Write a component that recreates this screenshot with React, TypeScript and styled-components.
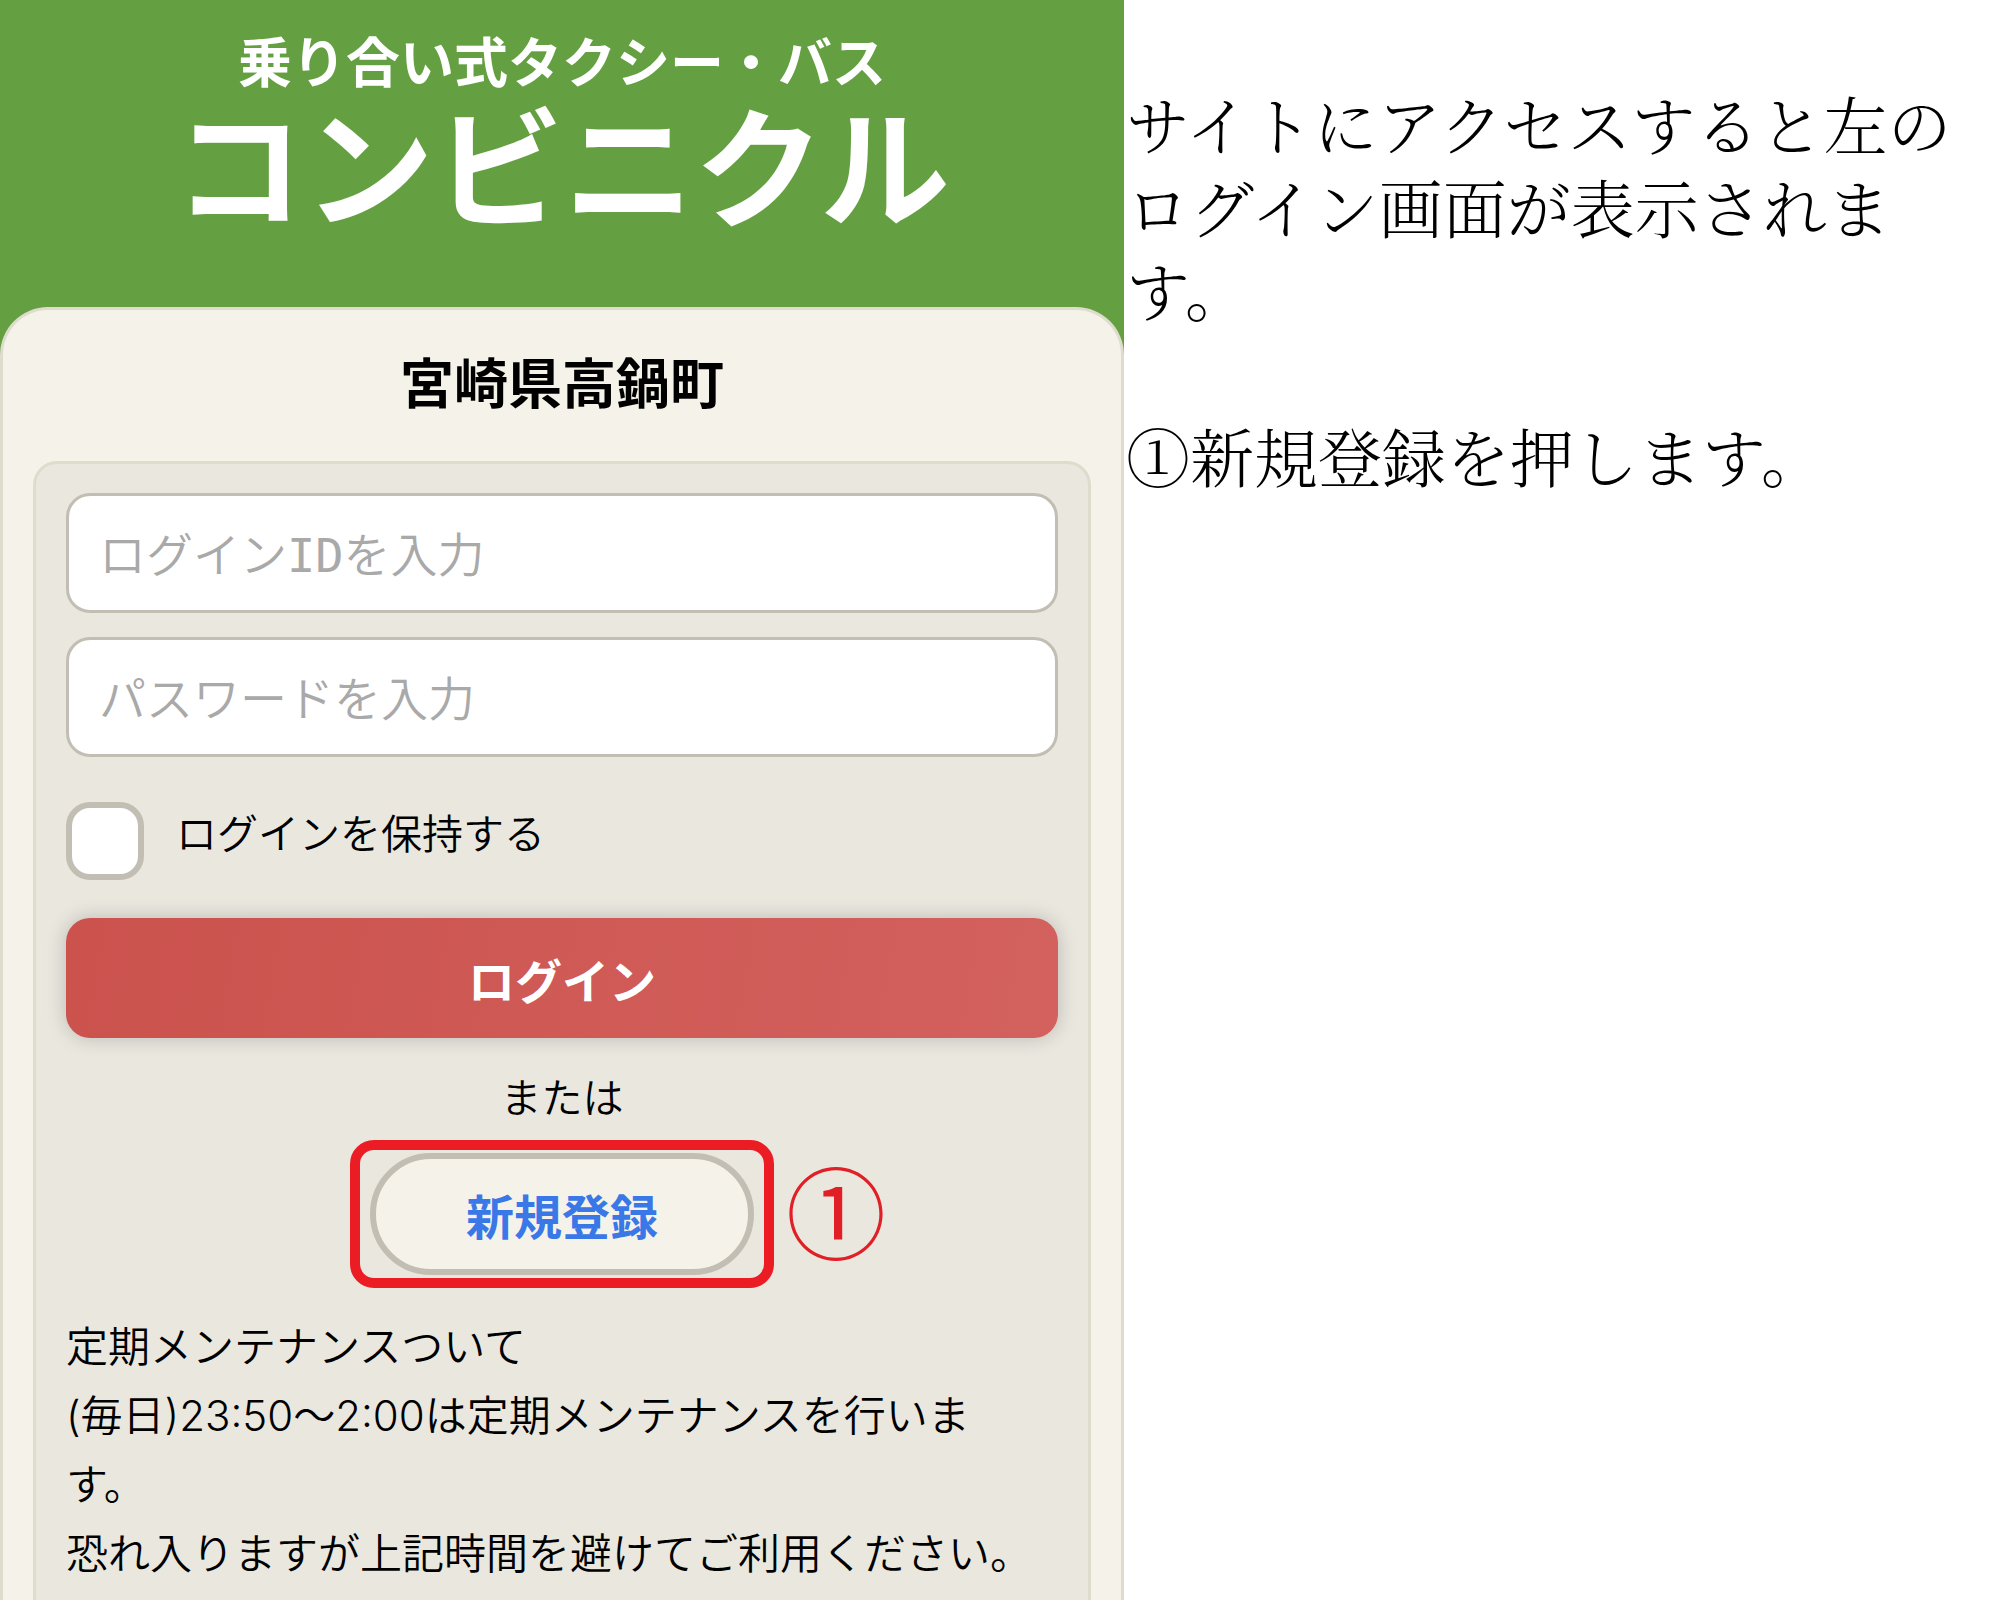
import React from "react";
import styled, { createGlobalStyle } from "styled-components";

const sans = `Inter, "Noto Sans CJK JP", sans-serif`;

const GlobalStyle = createGlobalStyle`
  *, *::before, *::after { box-sizing: border-box; }
  body { margin: 0; background: #ffffff; color: #000000; }
  h1, h2, p { margin: 0; }
`;

const Page = styled.div`
  display: grid;
  grid-template-columns: 562fr 438fr;
  min-height: 100vh;
`;

const Phone = styled.main`
  display: flex;
  flex-direction: column;
  min-width: 0;
  background: #64a042;
  font-family: ${sans};
  font-weight: 350;
`;

const Banner = styled.header`
  padding: 32px 24px 63px;
  text-align: center;
  color: #ffffff;
`;

const Tagline = styled.p`
  font-size: 54px;
  font-weight: 600;
  line-height: 64px;
`;

const ServiceName = styled.h1`
  font-size: 130px;
  font-weight: 700;
  line-height: 148px;
`;

const Sheet = styled.section`
  flex: 1;
  display: flex;
  flex-direction: column;
  padding: 43px 30px 0;
  background: #f5f3e9;
  border: 3px solid #dedccc;
  border-bottom: 0;
  border-radius: 48px 48px 0 0;
`;

const TownName = styled.h2`
  margin-bottom: 44px;
  text-align: center;
  font-size: 54px;
  font-weight: 600;
  line-height: 64px;
`;

const LoginForm = styled.form`
  flex: 1;
  display: flex;
  flex-direction: column;
  padding: 29px 30px 0;
  background: #eae7df;
  border: 3px solid #dedccc;
  border-bottom: 0;
  border-radius: 24px 24px 0 0;
`;

const Fields = styled.div`
  display: grid;
  gap: 24px;
`;

const TextField = styled.input`
  width: 100%;
  height: 120px;
  padding: 4px 30px 0;
  background: #ffffff;
  border: 3px solid #c2beb3;
  border-radius: 24px;
  font-family: "DejaVu Sans Mono", "Noto Sans CJK JP", monospace;
  font-size: 47px;
  font-weight: 350;
  color: #000000;

  &::placeholder {
    color: #a9a9a9;
    opacity: 1;
  }
`;

const KeepRow = styled.div`
  display: flex;
  align-items: flex-start;
  gap: 32px;
  margin: 45px 0 38px;
`;

const KeepBox = styled.input`
  appearance: none;
  flex: none;
  width: 78px;
  height: 78px;
  margin: 0;
  background: #ffffff;
  border: 6px solid #c2beb3;
  border-radius: 24px;

  &:checked {
    background: #64a042;
  }
`;

const KeepLabel = styled.label`
  font-size: 41px;
  line-height: 64px;
`;

const LoginButton = styled.button`
  height: 120px;
  padding: 0;
  border: 0;
  border-radius: 24px;
  background: linear-gradient(100deg, #cb524d, #d3615e);
  box-shadow: 0 0 20px rgba(0, 0, 0, 0.2);
  color: #ffffff;
  font-family: ${sans};
  font-size: 47px;
  font-weight: 600;
`;

const OrText = styled.p`
  margin: 28px 0 10px;
  text-align: center;
  font-size: 41px;
  line-height: 64px;
`;

const Highlight = styled.div`
  position: relative;
  align-self: center;
  padding: 3px 10px;
  border: 10px solid #ec1c24;
  border-radius: 24px;
`;

const RegisterButton = styled.button`
  display: block;
  height: 122px;
  padding: 0 90px;
  background: #f5f3e9;
  border: 6px solid #c2beb3;
  border-radius: 61px;
  color: #3b78e7;
  font-family: ${sans};
  font-size: 48px;
  font-weight: 600;
`;

const StepMark = styled.span`
  position: absolute;
  top: -5px;
  left: 100%;
  margin-left: 22px;
  color: #e01f26;
  font-family: "Noto Sans CJK JP", sans-serif;
  font-size: 100px;
  font-weight: 400;
  line-height: 128px;
`;

const Notice = styled.p`
  margin-top: 24px;
  padding-right: 24px;
  font-size: 42px;
  line-height: 69px;
`;

const Guide = styled.aside`
  min-width: 0;
  padding: 81px 0 0 2px;
  font-family: "Noto Serif CJK JP", "Noto Sans CJK JP", serif;
  font-size: 64px;
  font-weight: 300;
  line-height: 83px;
`;

const GuideText = styled.p`
  & + & {
    margin-top: 83px;
  }
`;

export default function App() {
  return (
    <Page lang="ja">
      <GlobalStyle />
      <Phone>
        <Banner>
          <Tagline>乗り合い式タクシー・バス</Tagline>
          <ServiceName>コンビニクル</ServiceName>
        </Banner>
        <Sheet>
          <TownName>宮崎県高鍋町</TownName>
          <LoginForm onSubmit={(event) => event.preventDefault()}>
            <Fields>
              <TextField
                type="text"
                aria-label="ログインID"
                placeholder="ログインIDを入力"
              />
              <TextField
                type="password"
                aria-label="パスワード"
                placeholder="パスワードを入力"
              />
            </Fields>
            <KeepRow>
              <KeepBox type="checkbox" id="keep-login" />
              <KeepLabel htmlFor="keep-login">ログインを保持する</KeepLabel>
            </KeepRow>
            <LoginButton type="submit">ログイン</LoginButton>
            <OrText>または</OrText>
            <Highlight>
              <RegisterButton type="button">新規登録</RegisterButton>
              <StepMark>①</StepMark>
            </Highlight>
            <Notice>
              定期メンテナンスついて
              <br />
              (毎日)23:50～2:00は定期メンテナンスを行います。
              <br />
              恐れ入りますが上記時間を避けてご利用ください。
            </Notice>
          </LoginForm>
        </Sheet>
      </Phone>
      <Guide>
        <GuideText>
          サイトにアクセスすると左のログイン画面が表示されます。
        </GuideText>
        <GuideText>①新規登録を押します。</GuideText>
      </Guide>
    </Page>
  );
}
